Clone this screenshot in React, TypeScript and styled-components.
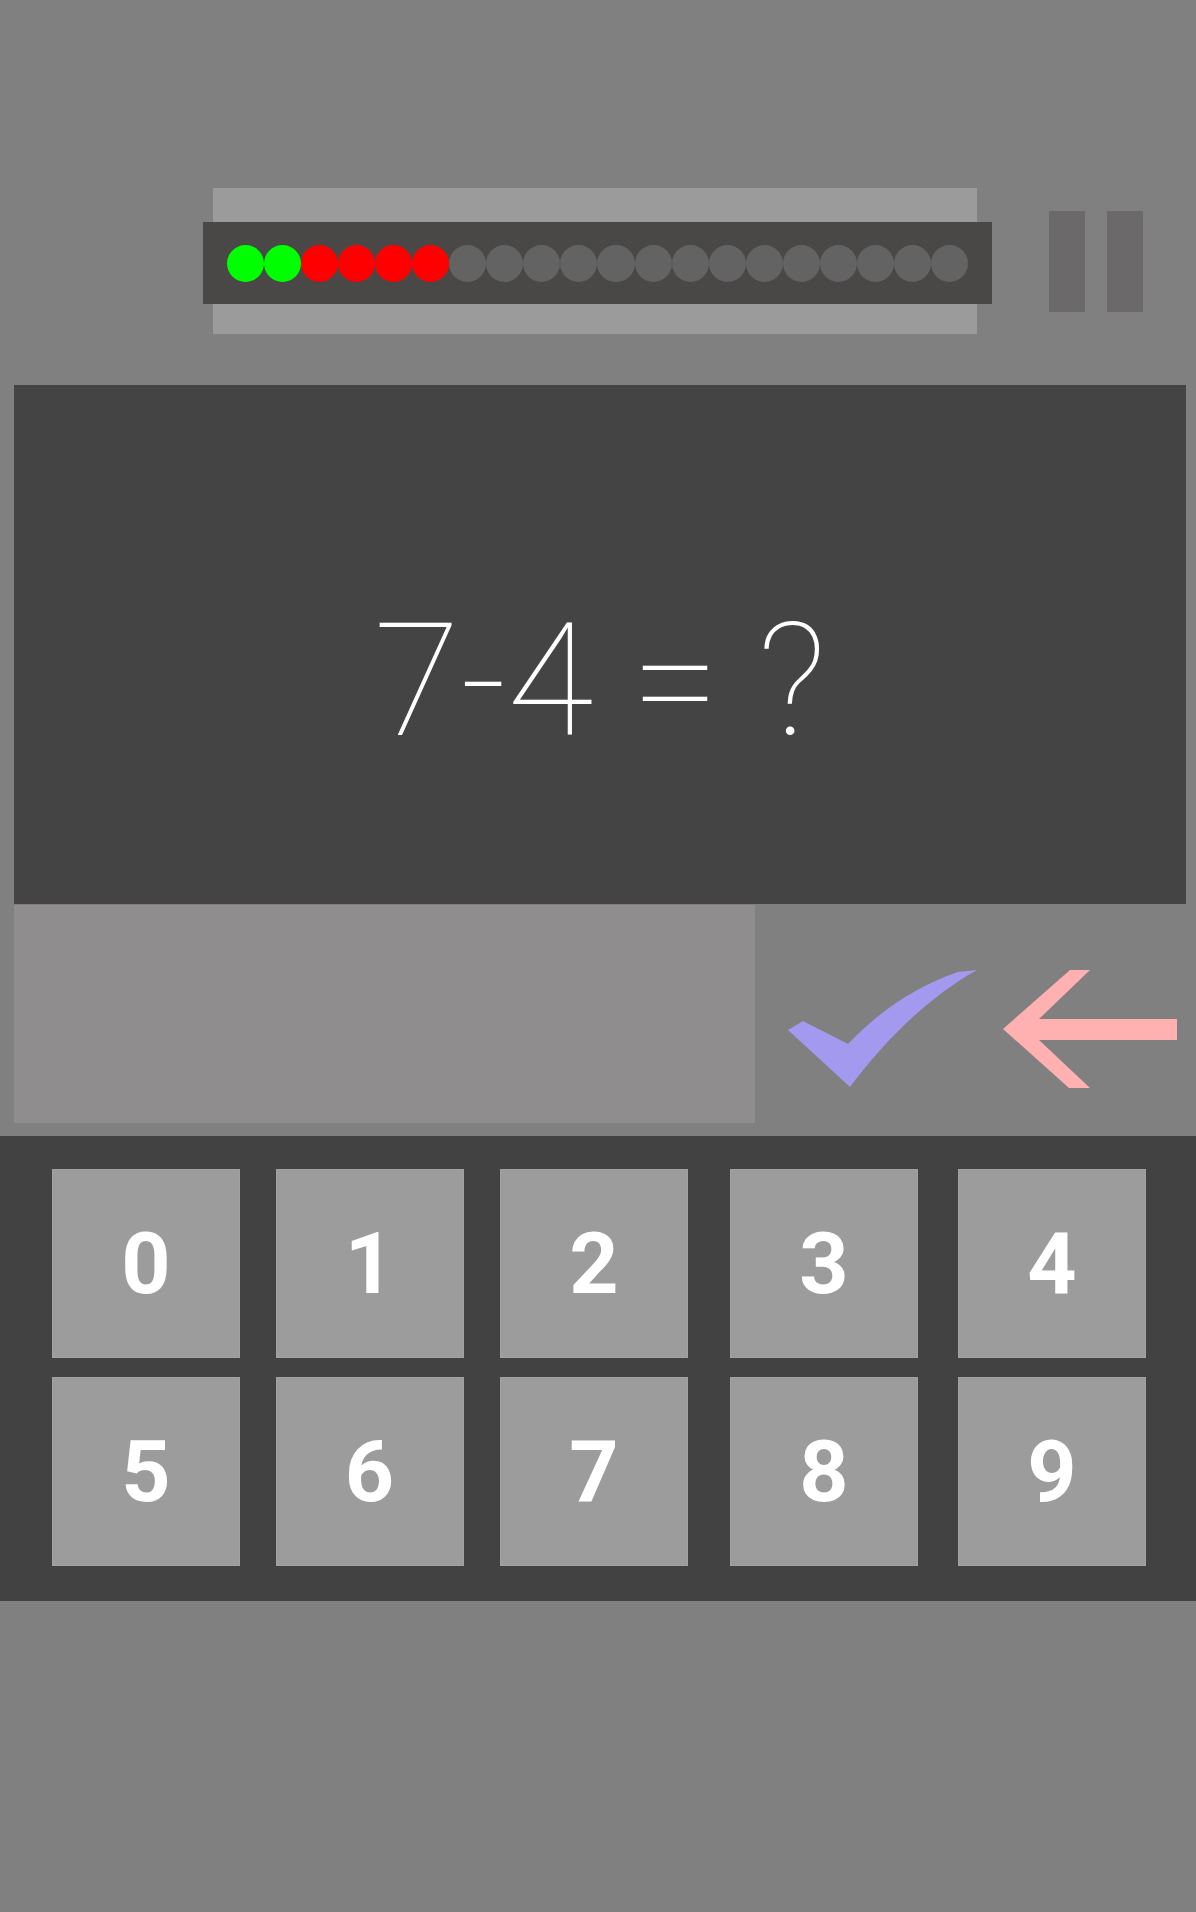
import React from "react";
import styled, { createGlobalStyle } from "styled-components";

const Global = createGlobalStyle`
  html, body { margin: 0; padding: 0; background: #808080; }
  body { font-family: Roboto, "Liberation Sans", sans-serif; }
`;

const Page = styled.div`
  width: 1196px;
  min-height: 1912px;
  background: #808080;
  display: flex;
  flex-direction: column;
`;

const TopBar = styled.div`
  height: 385px;
  box-sizing: border-box;
  padding-top: 188px;
  padding-left: 213px;
  display: flex;
  align-items: flex-start;
`;

const Track = styled.div`
  width: 764px;
  height: 146px;
  box-sizing: border-box;
  padding-top: 34px;
  background: #9b9b9b;
  display: flex;
  align-items: flex-start;
`;

const DotBar = styled.div`
  flex: 1;
  margin: 0 -15px 0 -10px;
  height: 82px;
  box-sizing: border-box;
  padding: 0 23px 0 23.5px;
  background: #4a4846;
  display: flex;
  align-items: center;
`;

const Dot = styled.div<{ $c: string }>`
  width: 37.1px;
  height: 37px;
  flex: none;
  border-radius: 50%;
  background: ${(p) => p.$c};
`;

const Pause = styled.div`
  margin: 23px 0 0 72px;
  display: flex;
  gap: 22px;
`;

const PauseBar = styled.div`
  width: 36px;
  height: 101px;
  background: #6b6969;
`;

const Question = styled.div`
  margin: 0 10px 0 14px;
  height: 519px;
  box-sizing: border-box;
  padding-top: 72px;
  background: #444444;
  display: flex;
  align-items: center;
  justify-content: center;
  color: #ffffff;
  font-family: Roboto, "Liberation Sans", sans-serif;
  font-weight: 100;
  font-size: 158px;
  line-height: 1;
  white-space: pre;
`;

const AnswerRow = styled.div`
  height: 232px;
  box-sizing: border-box;
  padding: 1px 0 0 14px;
  display: flex;
  align-items: flex-start;
`;

const AnswerBox = styled.div`
  width: 741px;
  height: 218px;
  background: #8f8d8d;
`;

const Actions = styled.div`
  margin: 55px 0 0 25px;
  display: flex;
  gap: 5px;
`;

const Keypad = styled.div`
  height: 465px;
  box-sizing: border-box;
  padding: 33px 0 0 52px;
  background: #424242;
  display: grid;
  grid-template-columns: 223.5px 224.5px 230px 228px 188px;
  grid-auto-rows: 189px;
  row-gap: 19px;
  align-content: start;
  justify-items: start;
`;

const Key = styled.div`
  width: 188px;
  height: 189px;
  box-sizing: border-box;
  border: 1px solid #a2a2a2;
  background: #9c9c9c;
  display: flex;
  align-items: center;
  justify-content: center;
  color: #ffffff;
  font-family: Roboto, "Liberation Sans", sans-serif;
  font-weight: 700;
  font-size: 86px;
  line-height: 1;
`;

const colors = [
  "#00ff00",
  "#00ff00",
  "#ff0000",
  "#ff0000",
  "#ff0000",
  "#ff0000",
  ...Array(14).fill("#636363"),
];

export default function App() {
  return (
    <Page>
      <Global />
      <TopBar>
        <Track>
          <DotBar>
            {colors.map((c, i) => (
              <Dot key={i} $c={c} />
            ))}
          </DotBar>
        </Track>
        <Pause>
          <PauseBar />
          <PauseBar />
        </Pause>
      </TopBar>
      <Question>7-4 = ?</Question>
      <AnswerRow>
        <AnswerBox />
        <Actions>
          <svg width="210" height="135" viewBox="780 960 210 135">
            <path
              d="M788,1030 L803,1021 L848,1044 C882,1008 920,985 958,972 L977,970 C930,996 885,1040 850,1087 Z"
              fill="#a399ef"
            />
          </svg>
          <svg width="190" height="135" viewBox="995 960 190 135">
            <path
              d="M1003,1029 L1070,970 L1090,970 L1039,1019 L1177,1019 L1177,1040 L1039,1040 L1090,1088 L1069,1088 Z"
              fill="#ffb0b0"
            />
          </svg>
        </Actions>
      </AnswerRow>
      <Keypad>
        {["0", "1", "2", "3", "4", "5", "6", "7", "8", "9"].map((d) => (
          <Key key={d}>{d}</Key>
        ))}
      </Keypad>
    </Page>
  );
}
